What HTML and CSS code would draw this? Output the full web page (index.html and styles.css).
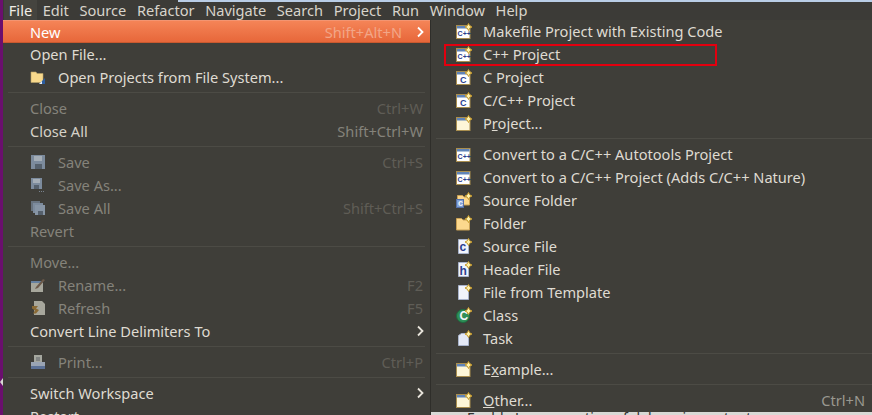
FILE: index.html
```html
<!DOCTYPE html>
<html lang="en">
  <head>
    <meta charset="UTF-8" />
    <title>File menu</title>
    <link rel="stylesheet" href="styles.css">
  </head>
  <body>
    <svg class="defs" width="0" height="0">
      <defs>
        <g id="spark">
          <path d="M12.5 0.5l1.2 2.3 2.3 1.2-2.3 1.2-1.2 2.3-1.2-2.3-2.3-1.2 2.3-1.2z" fill="#fdf3b0" stroke="#c79a2a" stroke-width="1"/>
        </g>
        <g id="win">
          <rect x="0.5" y="2.5" width="13.5" height="13" fill="#fff" stroke="#a98e4f"/>
          <rect x="1" y="3" width="12.5" height="2.5" fill="#5f83b8"/>
        </g>
        <symbol id="i-cpp" viewBox="0 0 16 16">
          <use href="#win"/>
          <text x="1.6" y="13" class="ico-txt small">C++</text>
          <use href="#spark"/>
        </symbol>
        <symbol id="i-c" viewBox="0 0 16 16">
          <use href="#win"/>
          <text x="4" y="13.5" class="ico-txt">C</text>
          <use href="#spark"/>
        </symbol>
        <symbol id="i-conv" viewBox="0 0 16 16">
          <use href="#win"/>
          <text x="1.6" y="13" class="ico-txt small">C++</text>
        </symbol>
        <symbol id="i-proj" viewBox="0 0 16 16">
          <rect x="0.5" y="2.5" width="13.5" height="13" fill="#fdf6d8" stroke="#a98e4f"/>
          <rect x="1" y="3" width="12.5" height="2.5" fill="#5f83b8"/>
          <use href="#spark"/>
        </symbol>
        <symbol id="i-folder" viewBox="0 0 16 16">
          <path d="M0.5 3.5h5l1.5 1.5h6.5v10h-13z" fill="#fcd88d" stroke="#c9a054"/>
          <use href="#spark"/>
        </symbol>
        <symbol id="i-srcfolder" viewBox="0 0 16 16">
          <path d="M1.5 3.5h5l1.5 1.5h5.5v8h-12z" fill="#fcd88d" stroke="#c9a054"/>
          <rect x="0.5" y="7.5" width="7" height="8" fill="#7f9fd6" stroke="#5571a8"/>
          <text x="2" y="14" class="ico-txt white">c</text>
          <use href="#spark"/>
        </symbol>
        <symbol id="i-file" viewBox="0 0 16 16">
          <path d="M2.5 1.5h10v14h-10z" fill="#f1f4fb" stroke="#a8b3cb"/>
          <use href="#spark"/>
        </symbol>
        <symbol id="i-src" viewBox="0 0 16 16">
          <path d="M2.5 1.5h10v14h-10z" fill="#f1f4fb" stroke="#a8b3cb"/>
          <text x="3.5" y="13" class="ico-txt big">c</text>
          <use href="#spark"/>
        </symbol>
        <symbol id="i-hdr" viewBox="0 0 16 16">
          <path d="M2.5 1.5h10v14h-10z" fill="#f1f4fb" stroke="#a8b3cb"/>
          <text x="3.5" y="13.5" class="ico-txt big">h</text>
          <use href="#spark"/>
        </symbol>
        <symbol id="i-class" viewBox="0 0 16 16">
          <circle cx="7" cy="9" r="6.5" fill="#2f8f58" stroke="#1e6a3f"/>
          <text x="3.5" y="13" class="ico-txt big white">C</text>
          <use href="#spark"/>
        </symbol>
        <symbol id="i-task" viewBox="0 0 16 16">
          <path d="M2.5 5.5l3-2h7v12h-10z" fill="#e4e9f6" stroke="#a8b3cb"/>
          <use href="#spark"/>
        </symbol>
        <symbol id="i-save" viewBox="0 0 16 16">
          <rect x="1" y="1" width="14" height="14" fill="#7c8b9d"/>
          <rect x="4" y="2" width="8" height="5" fill="#a5aeb7"/>
          <rect x="5" y="10" width="7" height="5" fill="#55606c"/>
        </symbol>
        <symbol id="i-saveas" viewBox="0 0 16 16">
          <rect x="1" y="1" width="11" height="11" fill="#7c8b9d"/>
          <rect x="3" y="2" width="7" height="4" fill="#a5aeb7"/>
          <rect x="4" y="8" width="5" height="4" fill="#55606c"/>
          <path d="M9 14.5h6" stroke="#78828e" stroke-dasharray="1 1"/>
        </symbol>
        <symbol id="i-saveall" viewBox="0 0 16 16">
          <rect x="1" y="1" width="9" height="10" fill="#68737f"/>
          <rect x="3" y="3" width="10" height="10" fill="#7c8b9d"/>
          <rect x="5" y="5" width="10" height="10" fill="#8795a5"/>
          <rect x="8" y="11" width="5" height="4" fill="#55606c"/>
        </symbol>
        <symbol id="i-rename" viewBox="0 0 16 16">
          <rect x="1" y="4" width="12" height="11" fill="#a7a79c"/>
          <rect x="1" y="4" width="12" height="2" fill="#65809f"/>
          <path d="M6 10l7-8 2 1-7 8-3 1z" fill="#6c5a4a"/>
        </symbol>
        <symbol id="i-refresh" viewBox="0 0 16 16">
          <path d="M4 1h8l3 3v11h-11z" fill="#a7a79c"/>
          <path d="M2 6h6l-2 2.5 3 1.5-3 3.5h-3l2-3-3-2z" fill="#8a6a35"/>
        </symbol>
        <symbol id="i-print" viewBox="0 0 16 16">
          <rect x="4" y="1" width="8" height="8" fill="#a5a79f"/>
          <path d="M6 4h4M6 6h4" stroke="#5c6066"/>
          <rect x="1" y="8" width="14" height="4" fill="#9aa4b3"/>
          <rect x="1" y="12" width="14" height="3" fill="#5c7196"/>
        </symbol>
        <symbol id="i-open" viewBox="0 0 16 16">
          <path d="M1 3h5l1 1.5h6v9h-12z" fill="#f8d98c" stroke="#b8a36a" stroke-width="0.6"/>
          <path d="M9 15l6-6v6z" fill="#2c5d9f"/>
          <path d="M9 15l3-3v3z" fill="#e8eef8"/>
        </symbol>
        <symbol id="i-arrow" viewBox="0 0 8 12">
          <path d="M2 1.5l4.5 4.5-4.5 4.5" fill="none" stroke="currentColor" stroke-width="1.8"/>
        </symbol>
      </defs>
    </svg>

    <i class="sash"></i>
    <div class="topstrip"></div>
    <nav class="menubar">
      <span class="top active">File</span>
      <span class="top">Edit</span>
      <span class="top">Source</span>
      <span class="top">Refactor</span>
      <span class="top">Navigate</span>
      <span class="top">Search</span>
      <span class="top">Project</span>
      <span class="top">Run</span>
      <span class="top">Window</span>
      <span class="top">Help</span>
    </nav>

    <div class="menus">
      <ul class="menu file-menu">
        <li class="row selected"><span class="label">New</span><kbd>Shift+Alt+N</kbd><svg class="arrow"><use href="#i-arrow"/></svg></li>
        <li class="row"><span class="label">Open File...</span></li>
        <li class="row"><svg class="ico"><use href="#i-open"/></svg><span class="label">Open Projects from File System...</span></li>
        <li class="sep"></li>
        <li class="row off"><span class="label">Close</span><kbd>Ctrl+W</kbd></li>
        <li class="row dim"><span class="label">Close All</span><kbd>Shift+Ctrl+W</kbd></li>
        <li class="sep"></li>
        <li class="row off"><svg class="ico"><use href="#i-save"/></svg><span class="label">Save</span><kbd>Ctrl+S</kbd></li>
        <li class="row off"><svg class="ico"><use href="#i-saveas"/></svg><span class="label">Save As...</span></li>
        <li class="row off"><svg class="ico"><use href="#i-saveall"/></svg><span class="label">Save All</span><kbd>Shift+Ctrl+S</kbd></li>
        <li class="row off"><span class="label">Revert</span></li>
        <li class="sep"></li>
        <li class="row off"><span class="label">Move...</span></li>
        <li class="row off"><svg class="ico"><use href="#i-rename"/></svg><span class="label">Rename...</span><kbd>F2</kbd></li>
        <li class="row off"><svg class="ico"><use href="#i-refresh"/></svg><span class="label">Refresh</span><kbd>F5</kbd></li>
        <li class="row"><span class="label">Convert Line Delimiters To</span><svg class="arrow"><use href="#i-arrow"/></svg></li>
        <li class="sep"></li>
        <li class="row off"><svg class="ico"><use href="#i-print"/></svg><span class="label">Print...</span><kbd>Ctrl+P</kbd></li>
        <li class="sep"></li>
        <li class="row"><span class="label">Switch Workspace</span><svg class="arrow"><use href="#i-arrow"/></svg></li>
        <li class="row"><span class="label">Restart</span></li>
      </ul>

      <div class="side">
        <ul class="menu new-menu">
          <li class="row"><svg class="ico"><use href="#i-cpp"/></svg><span class="label">Makefile Project with Existing Code</span></li>
          <li class="row boxed"><svg class="ico"><use href="#i-cpp"/></svg><span class="label">C++ Project</span></li>
          <li class="row"><svg class="ico"><use href="#i-c"/></svg><span class="label">C Project</span></li>
          <li class="row"><svg class="ico"><use href="#i-c"/></svg><span class="label">C/C++ Project</span></li>
          <li class="row"><svg class="ico"><use href="#i-proj"/></svg><span class="label">P<u>r</u>oject...</span></li>
          <li class="sep"></li>
          <li class="row"><svg class="ico"><use href="#i-conv"/></svg><span class="label">Convert to a C/C++ Autotools Project</span></li>
          <li class="row"><svg class="ico"><use href="#i-conv"/></svg><span class="label">Convert to a C/C++ Project (Adds C/C++ Nature)</span></li>
          <li class="row"><svg class="ico"><use href="#i-srcfolder"/></svg><span class="label">Source Folder</span></li>
          <li class="row"><svg class="ico"><use href="#i-folder"/></svg><span class="label">Folder</span></li>
          <li class="row"><svg class="ico"><use href="#i-src"/></svg><span class="label">Source File</span></li>
          <li class="row"><svg class="ico"><use href="#i-hdr"/></svg><span class="label">Header File</span></li>
          <li class="row"><svg class="ico"><use href="#i-file"/></svg><span class="label">File from Template</span></li>
          <li class="row"><svg class="ico"><use href="#i-class"/></svg><span class="label">Class</span></li>
          <li class="row"><svg class="ico"><use href="#i-task"/></svg><span class="label">Task</span></li>
          <li class="sep"></li>
          <li class="row"><svg class="ico"><use href="#i-proj"/></svg><span class="label">E<u>x</u>ample...</span></li>
          <li class="sep"></li>
          <li class="row"><svg class="ico"><use href="#i-proj"/></svg><span class="label"><u>O</u>ther...</span><kbd class="on">Ctrl+N</kbd></li>
        </ul>
        <p class="behind">Enable Lemma notion of debugging output</p>
      </div>
    </div>
  </body>
</html>
```

FILE: styles.css
```css
* {
  box-sizing: border-box;
}
html,
body {
  margin: 0;
  height: 415px;
  overflow: hidden;
}
body {
  font-family: "Noto Sans", sans-serif;
  font-size: 14.6px;
  background: #3d3c37;
  color: #dfdbd2;
  border-left: 3px solid #6a0f6e;
}
.defs {
  display: block;
  height: 0;
}

/* small sash handle on the purple edge */
.sash {
  position: absolute;
  left: 0;
  top: 378px;
  border: 4px solid transparent;
  border-left: 0;
  border-right: 3px solid #d8d8d4;
}

/* top of the window behind the menu bar */
.topstrip {
  height: 2px;
  margin-left: 175px;
  background: #b9cde6;
  margin-bottom: -2px;
  position: relative;
}
.menubar {
  display: flex;
  height: 20px;
  align-items: center;
  background: #3c3b37;
  padding-left: 0.5px;
}
.top {
  padding: 0 5.3px;
  line-height: 20px;
  color: #d8d4cb;
}
.top.active {
  background: #45443f;
  color: #f0ede6;
}

.menus {
  display: flex;
  height: 395px;
}
.menu {
  list-style: none;
  margin: 0;
  padding: 0;
  background: #3f3e39;
}
.file-menu {
  width: 428px;
  flex: none;
  height: 395px;
  overflow: hidden;
  border-right: 1px solid #2f2e2a;
}
.side {
  flex: 1;
  min-width: 0;
  height: 395px;
  overflow: hidden;
  display: flex;
  flex-direction: column;
  background: #d9d9d6;
}
.new-menu {
  height: 392px;
  flex: none;
}
.row {
  display: flex;
  align-items: center;
  height: 23px;
  padding: 0 7px 2px 27px;
  white-space: nowrap;
}
.ico {
  width: 16px;
  height: 16px;
  flex: none;
  margin-right: 12px;
}
.label {
  flex: 1;
}
kbd {
  font: inherit;
  color: #6e6c65;
}
.arrow {
  color: #e8e4db;
  flex: none;
  width: 8px;
  height: 12px;
  margin-left: 14px;
  margin-right: -1px;
}
.off {
  color: #85837b;
}
.off kbd {
  color: #5f5d56;
}
.dim {
  color: #d6d2c8;
}
.dim kbd {
  color: #85837b;
}
.selected {
  padding-bottom: 0;
  background: linear-gradient(#f58457, #e7673a);
  color: #fff;
  border-top: 1px solid #f39572;
  border-bottom: 1px solid #c9592f;
}
.selected kbd {
  color: #f2a688;
}
.selected .arrow {
  color: #fff;
}
.sep {
  height: 8px;
  margin: 0 5px;
  padding-top: 3px;
}
.sep::before {
  content: "";
  display: block;
  height: 1px;
  background: #4c4b45;
}

.new-menu .row {
  padding-left: 25px;
}
.new-menu .sep {
  margin: 0 0 0 5px;
}
.new-menu .ico {
  margin-right: 11px;
}
.new-menu kbd.on {
  color: #9a9890;
}
.boxed {
  position: relative;
}
/* red annotation drawn over the screenshot */
.boxed::after {
  content: "";
  box-sizing: border-box;
  position: absolute;
  left: 13px;
  top: 1px;
  width: 273px;
  height: 22px;
  border: 2px solid #e3000f;
}
.behind {
  margin: 0 0 0 36px;
  color: #333;
  font-size: 14px;
  line-height: 12px;
  white-space: nowrap;
}

.ico-txt {
  font-family: "Liberation Sans", sans-serif;
  font-weight: 700;
  font-size: 9px;
  fill: #2a3f8f;
}
.ico-txt.small {
  font-size: 7px;
}
.ico-txt.big {
  font-size: 12px;
}
.ico-txt.white {
  fill: #f2f5fb;
}
```
